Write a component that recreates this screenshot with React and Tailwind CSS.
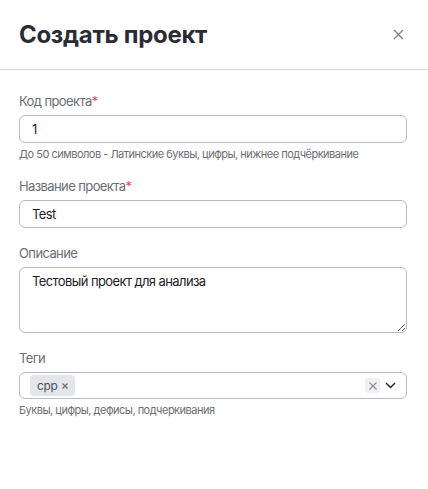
import React from "react";

const font = { fontFamily: "Inter, 'Noto Sans', sans-serif" };

const Label = ({ children, required }) => (
  <p className="text-[13px] leading-4 tracking-[-0.6px] text-[#6b6e75] mb-[6px]">
    {children}
    {required && <span className="text-[#e5484d]">*</span>}
  </p>
);

const Hint = ({ children }) => (
  <p className="text-[11px] leading-[14px] tracking-[-0.5px] text-[#6b6e75] mt-1">{children}</p>
);

export default function App() {
  return (
    <div className="w-[428px] h-[489px] bg-white" style={font}>
      <div className="h-[70px] flex items-center justify-between pl-[19px] pr-[24px] border-b border-[#d4d6db]">
        <h1 className="text-[24px] font-bold text-[#2a2c33] tracking-[-0.3px]">Создать проект</h1>
        <svg width="11" height="11" viewBox="0 0 11 11" className="text-[#7c8089]">
          <path d="M1 1L10 10M10 1L1 10" stroke="currentColor" strokeWidth="1.3" />
        </svg>
      </div>

      <div className="pl-[19px] pr-[21px] pt-[23px] flex flex-col">
        <Label required>Код проекта</Label>
        <input
          defaultValue="1"
          className="h-7 w-full rounded-md border border-[#b9bcc4] px-3 text-[13px] tracking-[-0.6px] text-[#1f2128] outline-none"
        />
        <Hint>До 50 символов - Латинские буквы, цифры, нижнее подчёркивание</Hint>

        <div className="mt-[17px]">
          <Label required>Название проекта</Label>
          <input
            defaultValue="Test"
            className="h-7 w-full rounded-md border border-[#b9bcc4] px-3 text-[13px] tracking-[-0.6px] text-[#1f2128] outline-none"
          />
        </div>

        <div className="mt-[17px]">
          <Label>Описание</Label>
          <textarea
            defaultValue="Тестовый проект для анализа"
            className="block h-[66px] w-full rounded-md border border-[#b9bcc4] px-3 pt-[4px] text-[13px] tracking-[-0.6px] text-[#1f2128] outline-none"
          />
        </div>

        <div className="mt-[17px]">
          <Label>Теги</Label>
          <div className="h-[27px] w-full rounded-md border border-[#b9bcc4] flex items-center pl-[10px] pr-[10px]">
            <span className="h-[21px] flex items-center gap-[5px] rounded bg-[#e3e5e9] px-[7px] text-[12px] tracking-[-0.4px] text-[#4d5058]">
              cpp
              <svg width="6" height="6" viewBox="0 0 6 6" className="text-[#6b6e75]">
                <path d="M0.5 0.5L5.5 5.5M5.5 0.5L0.5 5.5" stroke="currentColor" strokeWidth="1.2" />
              </svg>
            </span>
            <div className="flex-1" />
            <span className="w-[15px] h-[15px] flex items-center justify-center rounded-sm bg-[#eef0f3]">
              <svg width="8" height="8" viewBox="0 0 8 8" className="text-[#8a8e96]">
                <path d="M0.5 0.5L7.5 7.5M7.5 0.5L0.5 7.5" stroke="currentColor" strokeWidth="1.1" />
              </svg>
            </span>
            <svg width="11" height="7" viewBox="0 0 11 7" className="ml-[5px] text-[#2a2c33]">
              <path d="M1 1L5.5 5.5L10 1" stroke="currentColor" strokeWidth="1.5" fill="none" />
            </svg>
          </div>
          <Hint>Буквы, цифры, дефисы, подчеркивания</Hint>
        </div>
      </div>
    </div>
  );
}
